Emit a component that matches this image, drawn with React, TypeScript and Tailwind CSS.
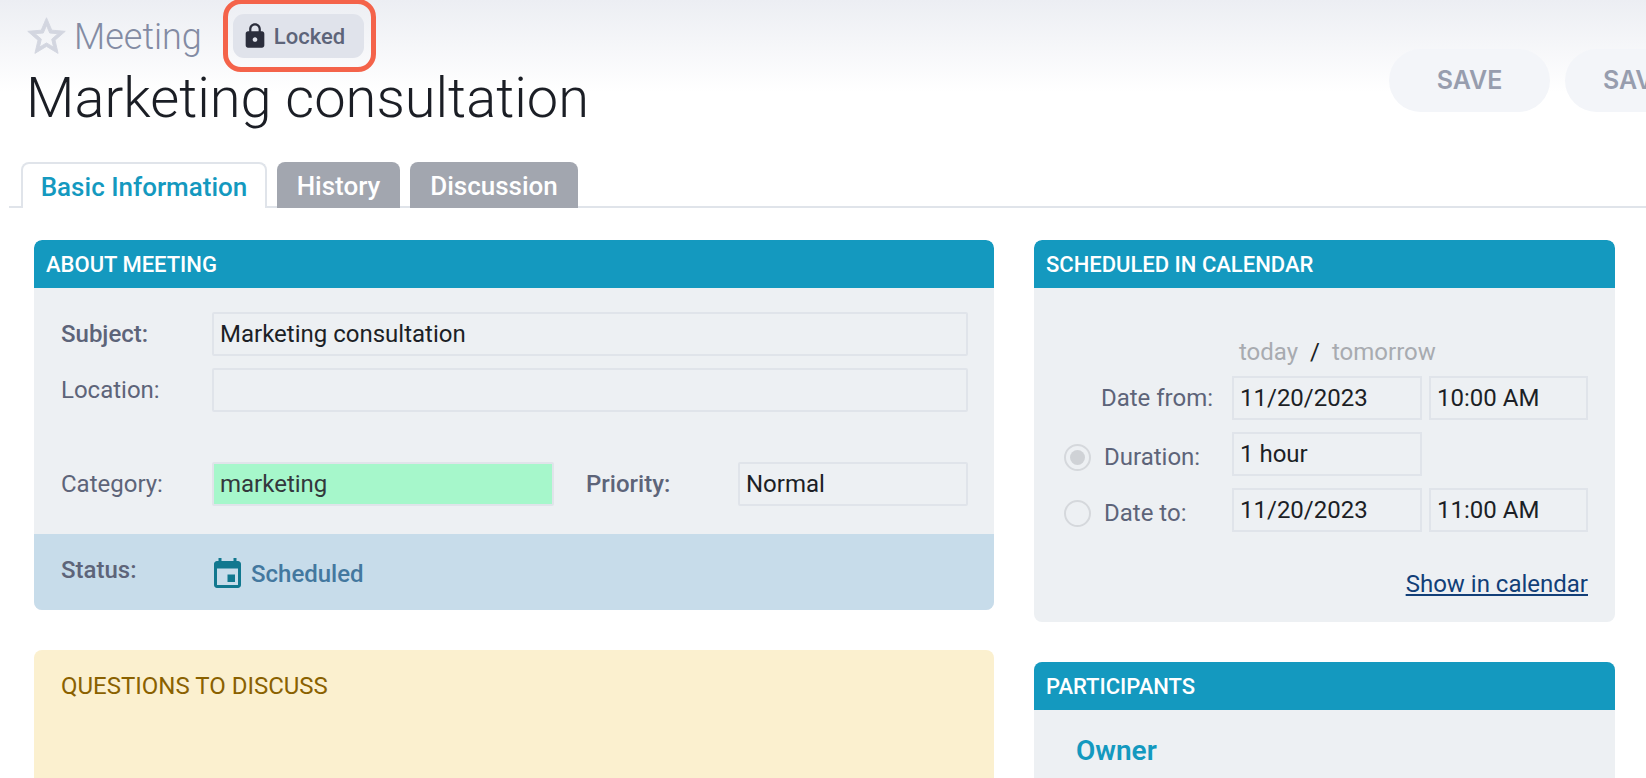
import React from "react";

function Field({ value, className = "" }: { value?: string; className?: string }) {
  return (
    <div className={`h-[44px] border-2 border-[#e0e4ea] rounded-[2px] bg-[#edf0f3] flex items-center px-[6px] text-[24px] text-[#1c1f26] ${className}`}>
      {value}
    </div>
  );
}

function PanelHeader({ title }: { title: string }) {
  return (
    <div className="h-[48px] bg-[#1499bf] rounded-t-[8px] flex items-center px-[12px] text-[22px] font-medium text-white">
      {title}
    </div>
  );
}

function Radio({ checked }: { checked?: boolean }) {
  return (
    <span className="w-[27px] h-[27px] mt-[6px] rounded-full border-2 border-[#d5d8dc] flex items-center justify-center shrink-0">
      {checked && <span className="w-[15px] h-[15px] rounded-full bg-[#cfd2d6]" />}
    </span>
  );
}

export default function App() {
  return (
    <div className="w-[1646px] h-[778px] overflow-hidden bg-white font-['Roboto',sans-serif]">
      <header className="h-[208px] border-b-2 border-[#e0e4ea] ml-[9px] flex flex-col">
        <div className="-ml-[9px] h-[162px] pl-[26px] bg-[linear-gradient(to_bottom,#eceef3_0,#ffffff_92px)] flex justify-between">
          <div>
            <div className="flex items-center h-[72px]">
              <svg viewBox="0 0 24 24" className="w-[45px] h-[45px] fill-[#d3d6e0] stroke-[#d3d6e0] stroke-[0.5] -ml-[2px] shrink-0">
                <path d="M22 9.24l-7.19-.62L12 2 9.19 8.63 2 9.24l5.46 4.73L5.82 21 12 17.27 18.18 21l-1.63-7.03L22 9.24zM12 15.4l-3.76 2.27 1-4.28-3.32-2.88 4.38-.38L12 6.1l1.71 4.04 4.38.38-3.32 2.88 1 4.28L12 15.4z" />
              </svg>
              <span className="ml-[5px] mt-[2px] text-[36px] font-light text-[#838ba3] leading-none">Meeting</span>
              <div className="relative ml-[31px] w-[131px] h-[44px] rounded-[11px] bg-[#e0e3eb] flex items-center pl-[8px]">
                <svg viewBox="0 0 24 24" className="w-[28px] h-[28px] fill-[#2b2e3c] shrink-0">
                  <path d="M18 8h-1V6c0-2.76-2.24-5-5-5S7 3.24 7 6v2H6c-1.1 0-2 .9-2 2v10c0 1.1.9 2 2 2h12c1.1 0 2-.9 2-2V10c0-1.1-.9-2-2-2zm-6 9c-1.1 0-2-.9-2-2s.9-2 2-2 2 .9 2 2-.9 2-2 2zm3.1-9H8.9V6c0-1.71 1.39-3.1 3.1-3.1 1.71 0 3.1 1.39 3.1 3.1v2z" />
                </svg>
                <span className="ml-[5px] text-[22px] font-medium text-[#5d6479]">Locked</span>
                <div className="absolute -left-[10px] -right-[12px] -top-[15px] -bottom-[14px] border-[5px] border-[#f4634a] rounded-[18px]" />
              </div>
            </div>
            <h1 className="text-[56px] font-light text-[#1b1e25] leading-[56px] -mt-[2px]">Marketing consultation</h1>
          </div>
          <div className="flex gap-[15px] pt-[49px] -mr-[80px] shrink-0">
            <div className="w-[161px] h-[63px] rounded-[32px] bg-[#f3f5f9] flex items-center justify-center font-['Inter',sans-serif] text-[25px] font-semibold text-[#979dae]">SAVE</div>
            <div className="w-[161px] h-[63px] rounded-[32px] bg-[#f3f5f9] flex items-center pl-[38px] font-['Inter',sans-serif] text-[25px] font-semibold text-[#979dae]">SAVE</div>
          </div>
        </div>
        <div className="flex items-end h-[46px] pl-[12px] gap-[10px] text-[26px] font-medium">
          <div className="w-[246px] h-[46px] mb-[-2px] pt-[2px] bg-white border-2 border-b-0 border-[#e0e4ea] rounded-t-[8px] flex items-center justify-center text-[#1499bf]">Basic Information</div>
          <div className="w-[123px] h-[46px] mb-[-2px] pt-[2px] bg-[#a2a6af] rounded-t-[8px] flex items-center justify-center text-white">History</div>
          <div className="w-[168px] h-[46px] mb-[-2px] pt-[2px] bg-[#a2a6af] rounded-t-[8px] flex items-center justify-center text-white">Discussion</div>
        </div>
      </header>

      <main className="flex gap-[40px] pl-[34px] pt-[32px]">
        <div className="w-[960px] flex flex-col gap-[40px] shrink-0">
          <section className="rounded-[8px] bg-[#edf0f3] overflow-hidden">
            <PanelHeader title="ABOUT MEETING" />
            <div className="pt-[24px] pl-[27px] pr-[26px] pb-[28px] text-[24px] text-[#5d6479]">
              <div className="flex items-center h-[44px]">
                <span className="w-[151px] font-medium">Subject:</span>
                <Field value="Marketing consultation" className="flex-1" />
              </div>
              <div className="flex items-center h-[44px] mt-[12px]">
                <span className="w-[151px]">Location:</span>
                <Field className="flex-1" />
              </div>
              <div className="flex items-center h-[44px] mt-[50px]">
                <span className="w-[151px]">Category:</span>
                <Field value="marketing" className="w-[342px] !bg-[#a6f7cb] !text-[#33383c]" />
                <span className="w-[152px] ml-[32px] font-medium">Priority:</span>
                <Field value="Normal" className="flex-1" />
              </div>
            </div>
            <div className="h-[76px] bg-[#c7dcea] pl-[27px] pt-[22px] flex items-start text-[24px]">
              <span className="w-[151px] font-medium text-[#5d6479] leading-[28px]">Status:</span>
              <svg viewBox="3 1 18 20" className="w-[29px] h-[30px] mt-[2px] ml-[1px] fill-[#11788f] shrink-0">
                <path d="M17 12h-5v5h5v-5zM16 1v2H8V1H6v2H5c-1.11 0-1.99.9-1.99 2L3 19c0 1.1.89 2 2 2h14c1.1 0 2-.9 2-2V5c0-1.1-.9-2-2-2h-1V1h-2zm3 18H5V8h14v11z" />
              </svg>
              <span className="ml-[9px] font-medium text-[#43789f] leading-[36px]">Scheduled</span>
            </div>
          </section>
          <section className="h-[140px] rounded-[8px] bg-[#fbf0cf] pl-[27px] pt-[18px] text-[24px] text-[#8a6100]">
            QUESTIONS TO DISCUSS
          </section>
        </div>

        <div className="w-[581px] flex flex-col gap-[40px] shrink-0">
          <section className="h-[382px] rounded-[8px] bg-[#edf0f3] overflow-hidden">
            <PanelHeader title="SCHEDULED IN CALENDAR" />
            <div className="pl-[30px] pr-[27px] pt-[50px] text-[24px] text-[#5d6479]">
              <div className="ml-[175px] h-[28px] leading-[28px] text-[#a8abb0] flex gap-[12px]">
                <span>today</span><span className="text-[#1c1f26]">/</span><span>tomorrow</span>
              </div>
              <div className="flex items-center h-[44px] mt-[10px]">
                <span className="w-[149px] text-right shrink-0">Date from:</span>
                <Field value="11/20/2023" className="ml-[19px] w-[190px] !rounded-none" />
                <Field value="10:00 AM" className="ml-[7px] w-[159px] !rounded-none" />
              </div>
              <div className="flex items-center h-[44px] mt-[12px]">
                <Radio checked />
                <span className="ml-[13px] w-[128px] mt-[6px]">Duration:</span>
                <Field value="1 hour" className="w-[190px] !rounded-none" />
              </div>
              <div className="flex items-center h-[44px] mt-[12px]">
                <Radio />
                <span className="ml-[13px] w-[128px] mt-[6px]">Date to:</span>
                <Field value="11/20/2023" className="w-[190px] !rounded-none" />
                <Field value="11:00 AM" className="ml-[7px] w-[159px] !rounded-none" />
              </div>
              <div className="mt-[34px] text-right text-[#123f78] underline">Show in calendar</div>
            </div>
          </section>
          <section className="rounded-t-[8px] bg-[#edf0f3] h-[116px]">
            <PanelHeader title="PARTICIPANTS" />
            <div className="pl-[42px] pt-[20px] text-[28px] font-semibold text-[#1499bf]">Owner</div>
          </section>
        </div>
      </main>
    </div>
  );
}
